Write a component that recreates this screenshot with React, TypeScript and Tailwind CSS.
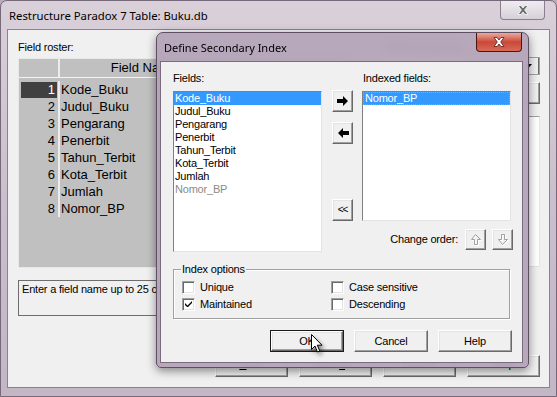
import React from 'react';

const ui = "font-['Liberation_Sans',Arial,sans-serif] text-[11px] tracking-[-0.2px] text-black";

const fields = ['Kode_Buku', 'Judul_Buku', 'Pengarang', 'Penerbit', 'Tahun_Terbit', 'Kota_Terbit', 'Jumlah', 'Nomor_BP'];

interface BtnProps {
  children?: React.ReactNode;
  className?: string;
  isDefault?: boolean;
}

// classic 3D push button
const WinButton: React.FC<BtnProps> = ({ children, className = '', isDefault = false }) => (
  <div className={`${isDefault ? 'border border-[#1a1a1a]' : ''} ${className}`}>
    <div className="w-full h-full flex items-center justify-center bg-[#f0f0f0] border border-t-white border-l-white border-r-[#696969] border-b-[#696969] shadow-[inset_-1px_-1px_0_#a0a0a0,inset_1px_1px_0_#e3e3e3]">
      {children}
    </div>
  </div>
);

const CheckBox: React.FC<{ label: string; checked?: boolean }> = ({ label, checked = false }) => (
  <div className="flex items-center h-[13px]">
    <div className="w-[13px] h-[13px] bg-white border border-t-[#a0a0a0] border-l-[#a0a0a0] border-r-white border-b-white shadow-[inset_1px_1px_0_#696969,inset_-1px_-1px_0_#e3e3e3] flex items-center justify-center">
      {checked && (
        <svg width="7" height="7" viewBox="0 0 7 7">
          <path d="M0 2 L0 4 L2 6 L3 6 L7 2 L7 0 L2.5 4.5 Z" fill="black" />
        </svg>
      )}
    </div>
    <span className="ml-[5px] leading-[13px]">{label}</span>
  </div>
);

const ArrowRight = () => (
  <svg width="12" height="10" viewBox="0 0 12 10">
    <polygon points="0,3 6,3 6,0 11,5 6,10 6,7 0,7" fill="black" />
  </svg>
);

const ArrowLeft = () => (
  <svg width="12" height="10" viewBox="0 0 12 10">
    <polygon points="12,3 6,3 6,0 1,5 6,10 6,7 12,7" fill="black" />
  </svg>
);

const OrderUp = () => (
  <svg width="12" height="12" viewBox="0 0 12 12">
    <polygon points="6.5,1.5 11.5,6.5 8.5,6.5 8.5,11.5 5.5,11.5 5.5,6.5 2.5,6.5" fill="none" stroke="#ffffff" />
    <polygon points="5.5,0.5 10.5,5.5 7.5,5.5 7.5,10.5 4.5,10.5 4.5,5.5 1.5,5.5" fill="none" stroke="#a0a0a0" />
  </svg>
);

const OrderDown = () => (
  <svg width="12" height="12" viewBox="0 0 12 12">
    <polygon points="6.5,11.5 11.5,6.5 8.5,6.5 8.5,1.5 5.5,1.5 5.5,6.5 2.5,6.5" fill="none" stroke="#ffffff" />
    <polygon points="5.5,10.5 10.5,5.5 7.5,5.5 7.5,0.5 4.5,0.5 4.5,5.5 1.5,5.5" fill="none" stroke="#a0a0a0" />
  </svg>
);

const CloseGlyph: React.FC<{ color: string; edge: string }> = ({ color, edge }) => (
  <svg width="12" height="10" viewBox="0 0 12 10">
    <path d="M1 0.5 L4 0.5 L6 3 L8 0.5 L11 0.5 L7.7 5 L11 9.5 L8 9.5 L6 7 L4 9.5 L1 9.5 L4.3 5 Z" fill={color} stroke={edge} strokeWidth="0.8" />
  </svg>
);

export default function App() {
  return (
    <div className={`w-[557px] h-[397px] relative overflow-hidden bg-[#b9adbb] ${ui}`}>
      {/* Restructure window */}
      <div className="w-full h-full flex flex-col rounded-t-[7px] border border-[#76697a] bg-gradient-to-b from-[#d9d0da] via-[#cabfcc] to-[#c3b7c6] px-[6px] pb-[8px]">
        <div className="h-[28px] flex items-start">
          <span className="pl-[2px] pt-[7px] font-['Noto_Sans',sans-serif] text-[11.3px] tracking-normal leading-[15px]">
            Restructure Paradox 7 Table: Buku.db
          </span>
          <div className="ml-auto mr-[5px] w-[45px] h-[19px] rounded-b-[4px] border border-t-0 border-[#8a7f8e] bg-gradient-to-b from-[#f0edf1] to-[#d6d0d8] flex items-center justify-center">
            <CloseGlyph color="#6e6e6e" edge="#ffffff" />
          </div>
        </div>

        <div className="flex-1 bg-[#f0f0f0] border border-[#8c8190] flex flex-col pl-[10px] pr-[9px] pt-[10px]">
          <div className="flex">
            {/* left side */}
            <div className="w-[330px] flex flex-col">
              <div className="h-[14px] leading-[14px]">Field roster:</div>
              <div className="mt-[4px] h-[210px] bg-[#c0c0c0] border border-[#e8e8e8] flex flex-col font-['Liberation_Sans',Arial,sans-serif] text-[13px] tracking-normal">
                <div className="h-[19px] flex border-b border-b-[#f4f4f4]">
                  <div className="w-[41px] border-r-2 border-r-[#ececec]" />
                  <div className="w-[168px] text-center leading-[18px]">Field Name</div>
                </div>
                <div className="flex items-start pt-[3px]">
                  <div className="w-[41px] border-r-2 border-r-[#ececec] flex flex-col">
                    {fields.map((_, i) => (
                      <div key={i} className="h-[17px] flex items-center">
                        <div
                          className={`ml-[2px] w-[36px] h-[16px] text-right pr-[2px] leading-[16px] ${
                            i === 0 ? 'bg-[#404040] text-white' : ''
                          }`}
                        >
                          {i + 1}
                        </div>
                      </div>
                    ))}
                  </div>
                  <div className="flex flex-col pl-[1px]">
                    {fields.map((f) => (
                      <div key={f} className="h-[17px] leading-[17px]">
                        {f}
                      </div>
                    ))}
                  </div>
                </div>
              </div>
              <div className="mt-[12px] h-[36px] border border-[#6d6d6d] pl-[3px] pt-[1px] leading-[14px] whitespace-nowrap overflow-hidden">
                Enter a field name up to 25 characters long.
              </div>
            </div>

            {/* right side */}
            <div className="ml-auto w-[158px] flex flex-col">
              <div className="h-[14px] leading-[14px] pl-[4px]">Table properties:</div>
              <div className="mt-[3px] h-[18px] bg-white border border-[#a0a0a0] flex justify-end">
                <div className="w-[16px] h-full bg-[#f0f0f0] border-l border-[#d0d0d0] border-r border-r-[#696969] flex items-center justify-start pl-[1px]">
                  <svg width="7" height="4" viewBox="0 0 7 4">
                    <polygon points="0,0 7,0 3.5,4" fill="black" />
                  </svg>
                </div>
              </div>
              <WinButton className="mt-[7px] h-[22px] w-full">Define...</WinButton>
              <div className="mt-[12px] h-[151px] bg-white border border-t-[#a0a0a0] border-l-[#a0a0a0] border-r-[#e3e3e3] border-b-[#e3e3e3]" />
            </div>
          </div>

          <div className="mt-[39px] flex justify-end gap-[11px]">
            <WinButton className="w-[73px] h-[22px]">
              <span className="pb-[4px]">
                <span className="underline">S</span>ave
              </span>
            </WinButton>
            <WinButton className="w-[73px] h-[22px]">
              <span className="pb-[4px]">
                Save <span className="underline">a</span>s...
              </span>
            </WinButton>
            <WinButton className="w-[73px] h-[22px]">
              <span className="pb-[4px]">Cancel</span>
            </WinButton>
            <WinButton className="w-[73px] h-[22px]">
              <span className="pb-[4px]">Help</span>
            </WinButton>
          </div>
        </div>
      </div>

      {/* Define Secondary Index dialog */}
      <div className="absolute left-[156px] top-[32px] w-[373px] h-[336px] rounded-t-[7px] rounded-b-[5px] border border-[#5e4f63] bg-[#b3a3b8]/95 backdrop-blur-[4px] shadow-[0_3px_10px_rgba(0,0,0,0.45)] flex flex-col pl-[3px] pr-[5px] pb-[4px]">
        <div className="h-[28px] flex items-start">
          <span className="pl-[4px] pt-[7px] font-['Noto_Sans',sans-serif] text-[11px] tracking-normal leading-[15px]">
            Define Secondary Index
          </span>
          <div className="ml-auto mr-[1px] w-[46px] h-[19px] rounded-b-[4px] border border-t-0 border-[#4a1512] bg-gradient-to-b from-[#e9a99c] via-[#c9483a] to-[#d86a55] flex items-center justify-center">
            <CloseGlyph color="#ffffff" edge="#5a1a14" />
          </div>
        </div>

        <div className="flex-1 bg-[#f0f0f0] border border-[#7a6b7f] flex flex-col">
          <div className="flex pl-[12px] pt-[10px]">
            <div className="w-[149px] flex flex-col">
              <div className="h-[13px] leading-[13px]">Fields:</div>
              <div className="mt-[6px] h-[161px] bg-white border border-t-[#808080] border-l-[#808080] border-r-[#e3e3e3] border-b-[#e3e3e3] flex flex-col">
                {fields.map((f, i) => (
                  <div
                    key={f}
                    className={`h-[13px] leading-[13px] pl-[1px] ${
                      i === 0 ? 'bg-[#3399ff] text-white' : i === 7 ? 'text-[#8a8a8a]' : ''
                    }`}
                  >
                    {f}
                  </div>
                ))}
              </div>
            </div>

            <div className="ml-[10px] w-[21px] flex flex-col pt-[18px]">
              <WinButton className="w-[21px] h-[22px]">
                <ArrowRight />
              </WinButton>
              <WinButton className="mt-[10px] w-[21px] h-[22px]">
                <ArrowLeft />
              </WinButton>
              <WinButton className="mt-[55px] w-[21px] h-[22px]">
                <span className="text-[10px] tracking-[-1px] leading-none pb-[1px]">&lt;&lt;</span>
              </WinButton>
            </div>

            <div className="ml-[9px] w-[151px] flex flex-col">
              <div className="h-[13px] leading-[13px] pl-[1px]">Indexed fields:</div>
              <div className="mt-[6px] w-[149px] h-[130px] bg-white border border-t-[#808080] border-l-[#808080] border-r-[#e3e3e3] border-b-[#e3e3e3] flex flex-col">
                <div className="h-[13px] leading-[11px] pl-[1px] bg-[#3399ff] text-white border border-dotted border-[#d29a55]">
                  Nomor_BP
                </div>
              </div>
              <div className="mt-[8px] h-[21px] flex items-center justify-end">
                <span>Change order:</span>
                <WinButton className="ml-[7px] w-[21px] h-[21px]">
                  <OrderUp />
                </WinButton>
                <WinButton className="ml-[6px] w-[21px] h-[21px]">
                  <OrderDown />
                </WinButton>
              </div>
            </div>
          </div>

          <div className="mt-[17px] ml-[12px] w-[337px] h-[50px] relative border border-[#a0a0a0] shadow-[1px_1px_0_#ffffff,inset_1px_1px_0_#ffffff]">
            <span className="absolute -top-[7px] left-[7px] px-[1px] bg-[#f0f0f0] leading-[13px]">Index options</span>
            <div className="grid grid-cols-[149px_auto] gap-y-[4px] pl-[8px] pt-[11px]">
              <CheckBox label="Unique" />
              <CheckBox label="Case sensitive" />
              <CheckBox label="Maintained" checked />
              <CheckBox label="Descending" />
            </div>
          </div>

          <div className="mt-[11px] flex justify-end gap-[10px] pr-[10px]">
            <WinButton isDefault className="w-[74px] h-[22px]">OK</WinButton>
            <WinButton className="w-[74px] h-[22px]">Cancel</WinButton>
            <WinButton className="w-[74px] h-[22px]">Help</WinButton>
          </div>
        </div>
      </div>

      {/* mouse pointer */}
      <svg
        className="absolute left-[311px] top-[334px] drop-shadow-[2px_3px_2px_rgba(0,0,0,0.45)]"
        width="13"
        height="20"
        viewBox="0 0 13 20"
      >
        <path d="M0.5 0.5 L0.5 15.5 L4 12 L6.5 18 L8.8 17 L6.3 11.2 L11 11.2 Z" fill="white" stroke="black" />
      </svg>
    </div>
  );
}
